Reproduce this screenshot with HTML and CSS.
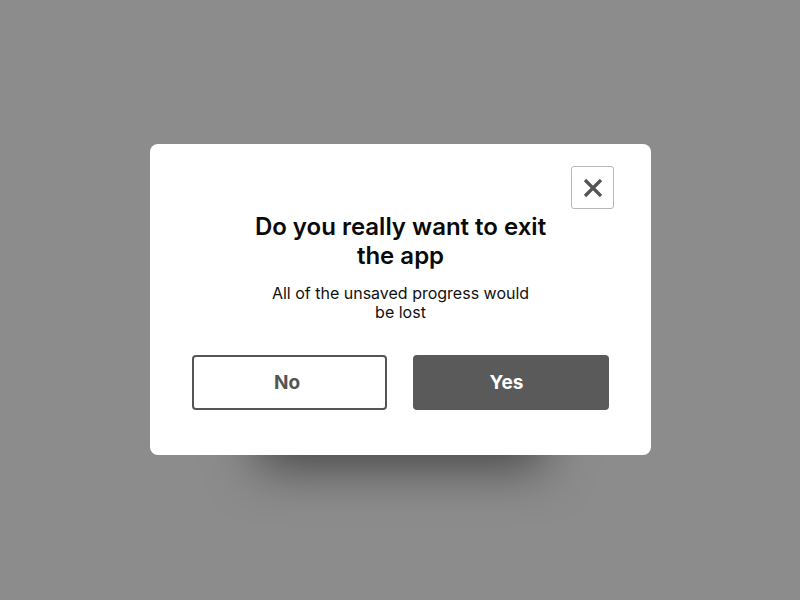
FILE: index.html
```html
<!DOCTYPE html>
<html lang="en">
<head>
  <meta charset="UTF-8" />
  <meta name="viewport" content="width=device-width, initial-scale=1.0"/>
  <title>Exit app</title>
  <link rel="stylesheet" href="styles.css">
</head>
<body>

  <!-- Exit confirmation dialog -->
  <div class="dialog">
    <button class="fechar" aria-label="Close">
      <svg width="20" height="20" viewBox="0 0 20 20">
        <path d="M2 2 L18 18 M18 2 L2 18" stroke="#555" stroke-width="3.2" stroke-linecap="butt" fill="none"/>
      </svg>
    </button>

    <h1>Do you really want to exit the app</h1>
    <p>All of the unsaved progress would be lost</p>

    <div class="acoes">
      <button class="btn btn-nao">No</button>
      <button class="btn btn-sim">Yes</button>
    </div>
  </div>

</body>
</html>
```

FILE: styles.css
```css
body {
  margin: 0;
  height: 600px;
  background-color: #8c8c8c;
  font-family: Inter, "Noto Sans", sans-serif;
  display: flex;
  justify-content: center;
  align-items: flex-start;
}
.dialog {
  position: relative;
  box-sizing: border-box;
  width: 501px;
  height: 311px;
  margin-top: 144px;
  margin-left: 1px;
  padding: 68px 42px 45px;
  background: #fff;
  border-radius: 8px;
  text-align: center;
  box-shadow: 0 120px 50px -108px rgba(0, 0, 0, 0.5);
}
/* Close button in the top corner */
.fechar {
  position: absolute;
  top: 22px;
  right: 37px;
  width: 43px;
  height: 43px;
  padding: 0;
  display: flex;
  align-items: center;
  justify-content: center;
  background: #fff;
  border: 1.5px solid #b8b8b8;
  border-radius: 3px;
  cursor: pointer;
}
h1 {
  margin: 0 auto;
  max-width: 300px;
  font-size: 24px;
  line-height: 29px;
  font-weight: 600;
  color: #0a0a0a;
}
p {
  margin: 14px auto 0;
  max-width: 270px;
  font-size: 16px;
  line-height: 19px;
  color: #111;
}
.acoes {
  display: flex;
  justify-content: space-between;
  margin-top: 33px;
}
.btn {
  box-sizing: border-box;
  width: 195px;
  height: 55px;
  padding: 0 5px 0 0;
  font-family: inherit;
  font-size: 19px;
  font-weight: 700;
  border-radius: 4px;
  cursor: pointer;
}
.btn-nao {
  background: #fff;
  color: #555;
  border: 2px solid #555;
}
.btn-sim {
  width: 196px;
  padding-right: 9px;
  background: #5a5a5a;
  color: #fff;
  border: none;
}
```
